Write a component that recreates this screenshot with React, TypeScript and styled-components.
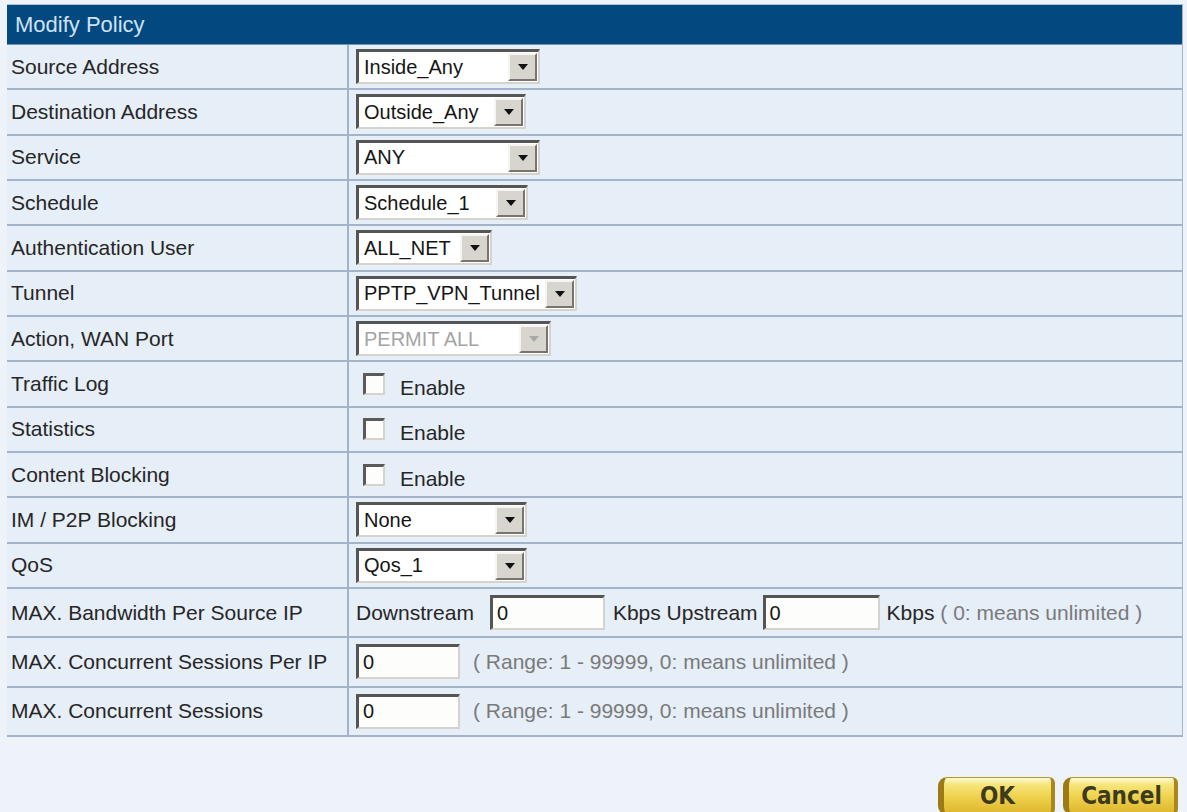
import React from "react";
import styled, { createGlobalStyle } from "styled-components";

const GlobalStyle = createGlobalStyle`
  html, body {
    margin: 0;
    padding: 0;
    background: #eef2f9;
  }
  body {
    font-family: "Liberation Sans", Arial, sans-serif;
    font-size: 21px;
    color: #262626;
    overflow: hidden;
  }
`;

const Page = styled.div`
  padding: 4px 0 0 7px;
  width: 1176px;
`;

const Panel = styled.section`
  width: 1176px;
  box-sizing: border-box;
  border-right: 1px solid #a3b3c8;
`;

const TitleBar = styled.div`
  box-sizing: border-box;
  height: 41px;
  border-top: 1px solid #a9c4de;
  border-bottom: 1px solid #6f94b8;
  background: #03487f;
  color: #cfe2f3;
  font-size: 22px;
  display: flex;
  align-items: center;
  padding-left: 8px;
`;

const Row = styled.div<{ $tall?: boolean }>`
  box-sizing: border-box;
  display: grid;
  grid-template-columns: 342px 1fr;
  height: ${(p) => (p.$tall ? 49.33 : 45.33)}px;
  background: #e6eef8;
  border-bottom: 2px solid #a2b3ca;
`;

const Label = styled.div`
  display: flex;
  align-items: center;
  padding-left: 4px;
  border-right: 2px solid #a2b3ca;
  white-space: nowrap;
`;

const Value = styled.div`
  display: flex;
  align-items: center;
  padding-left: 7px;
  white-space: nowrap;
`;

const SelectBox = styled.div<{ $w: number; $disabled?: boolean }>`
  box-sizing: border-box;
  width: ${(p) => p.$w}px;
  height: 35px;
  display: flex;
  align-items: stretch;
  background: #ffffff;
  border-style: solid;
  border-width: 3px 2px 2px 3px;
  border-color: #555555 #d6d3cc #d6d3cc #555555;
  color: ${(p) => (p.$disabled ? "#a4a4a4" : "#151515")};
  font-size: 20px;
`;

const SelectText = styled.span`
  flex: 1;
  display: flex;
  align-items: center;
  padding-left: 5px;
  overflow: hidden;
`;

const DropButton = styled.span`
  box-sizing: border-box;
  width: 29px;
  margin: 1px;
  background: #d8d5cf;
  border-style: solid;
  border-width: 2px;
  border-color: #f6f5f1 #77746f #77746f #f6f5f1;
  display: flex;
  align-items: center;
  justify-content: center;
`;

const Arrow = styled.span<{ $disabled?: boolean }>`
  width: 0;
  height: 0;
  border-left: 5px solid transparent;
  border-right: 5px solid transparent;
  border-top: 6px solid ${(p) => (p.$disabled ? "#a8a8a8" : "#111111")};
`;

const TextField = styled.div<{ $w: number; $ml?: number; $mr?: number }>`
  box-sizing: border-box;
  width: ${(p) => p.$w}px;
  height: 35px;
  margin-left: ${(p) => p.$ml ?? 0}px;
  margin-right: ${(p) => p.$mr ?? 0}px;
  background: #fdfdfb;
  border-style: solid;
  border-width: 3px 2px 2px 3px;
  border-color: #555555 #d6d3cc #d6d3cc #555555;
  display: flex;
  align-items: center;
  padding-left: 4px;
  color: #151515;
  font-size: 20px;
`;

const CheckRow = styled.label`
  display: flex;
  align-items: flex-end;
  gap: 15px;
  margin-left: 7px;
`;

const CheckBox = styled.span`
  box-sizing: border-box;
  width: 22px;
  height: 22px;
  background: #fdfdfb;
  border-style: solid;
  border-width: 3px 2px 2px 3px;
  border-color: #5a5a5a #d6d3cc #d6d3cc #5a5a5a;
`;

const CheckText = styled.span`
  line-height: 1;
  position: relative;
  top: 3px;
`;

const Hint = styled.span<{ $ml?: number }>`
  color: #7a7a7a;
  margin-left: ${(p) => p.$ml ?? 0}px;
`;

const ButtonBar = styled.div`
  display: flex;
  justify-content: flex-end;
  gap: 8px;
  margin-top: 40px;
  padding-right: 5px;
`;

const GoldButton = styled.button<{ $w: number }>`
  box-sizing: border-box;
  width: ${(p) => p.$w}px;
  height: 38px;
  padding: 0;
  border: 1px solid #b39528;
  border-left: 6px solid #9c7b16;
  border-right: 4px solid #a8871d;
  border-radius: 9px 6px 6px 9px;
  background: linear-gradient(
    to bottom,
    #fffbd8 0%,
    #f7e67c 18%,
    #eed04a 55%,
    #ddb52c 100%
  );
  color: #3d3b1f;
  font-family: "Liberation Sans Narrow", "DejaVu Sans Condensed", "Liberation Sans", sans-serif;
  font-stretch: condensed;
  font-weight: bold;
  font-size: 24px;
  cursor: pointer;
`;

type SelectProps = { value: string; width: number; disabled?: boolean };

const Select = ({ value, width, disabled }: SelectProps) => (
  <SelectBox $w={width} $disabled={disabled} role="combobox" aria-disabled={disabled}>
    <SelectText>{value}</SelectText>
    <DropButton>
      <Arrow $disabled={disabled} />
    </DropButton>
  </SelectBox>
);

const Check = () => (
  <CheckRow>
    <CheckBox />
    <CheckText>Enable</CheckText>
  </CheckRow>
);

const selects: { label: string; value: string; width: number; disabled?: boolean }[] = [
  { label: "Source Address", value: "Inside_Any", width: 184 },
  { label: "Destination Address", value: "Outside_Any", width: 170 },
  { label: "Service", value: "ANY", width: 184 },
  { label: "Schedule", value: "Schedule_1", width: 172 },
  { label: "Authentication User", value: "ALL_NET", width: 136 },
  { label: "Tunnel", value: "PPTP_VPN_Tunnel", width: 221 },
  { label: "Action, WAN Port", value: "PERMIT ALL", width: 195, disabled: true },
];

const toggles = ["Traffic Log", "Statistics", "Content Blocking"];

const lowerSelects = [
  { label: "IM / P2P Blocking", value: "None", width: 171 },
  { label: "QoS", value: "Qos_1", width: 171 },
];

export default function App() {
  return (
    <>
      <GlobalStyle />
      <Page>
        <Panel>
          <TitleBar>Modify Policy</TitleBar>
          {selects.map((s) => (
            <Row key={s.label}>
              <Label>{s.label}</Label>
              <Value>
                <Select value={s.value} width={s.width} disabled={s.disabled} />
              </Value>
            </Row>
          ))}
          {toggles.map((t) => (
            <Row key={t}>
              <Label>{t}</Label>
              <Value>
                <Check />
              </Value>
            </Row>
          ))}
          {lowerSelects.map((s) => (
            <Row key={s.label}>
              <Label>{s.label}</Label>
              <Value>
                <Select value={s.value} width={s.width} />
              </Value>
            </Row>
          ))}
          <Row $tall>
            <Label>MAX. Bandwidth Per Source IP</Label>
            <Value>
              Downstream
              <TextField $w={115} $ml={16} $mr={8}>0</TextField>
              Kbps Upstream
              <TextField $w={117} $ml={5} $mr={7}>0</TextField>
              Kbps&nbsp;<Hint>( 0: means unlimited )</Hint>
            </Value>
          </Row>
          <Row $tall>
            <Label>MAX. Concurrent Sessions Per IP</Label>
            <Value>
              <TextField $w={104}>0</TextField>
              <Hint $ml={13}>( Range: 1 - 99999, 0: means unlimited )</Hint>
            </Value>
          </Row>
          <Row $tall>
            <Label>MAX. Concurrent Sessions</Label>
            <Value>
              <TextField $w={104}>0</TextField>
              <Hint $ml={13}>( Range: 1 - 99999, 0: means unlimited )</Hint>
            </Value>
          </Row>
        </Panel>
        <ButtonBar>
          <GoldButton $w={117}>OK</GoldButton>
          <GoldButton $w={115}>Cancel</GoldButton>
        </ButtonBar>
      </Page>
    </>
  );
}
